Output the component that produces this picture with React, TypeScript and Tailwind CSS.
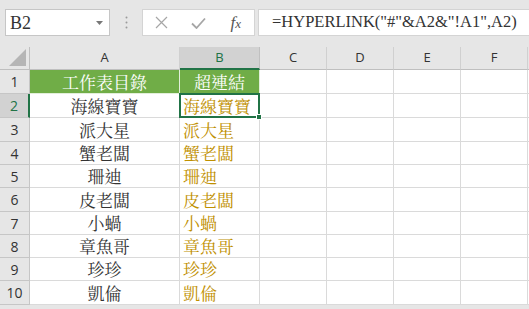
import React from "react";

const names = ["海線寶寶", "派大星", "蟹老闆", "珊迪", "皮老闆", "小蝸", "章魚哥", "珍珍", "凱倫"];
const heights = [24, 24, 24, 23, 23, 24, 23, 23, 23, 24];
const cjk = { fontFamily: '"Noto Serif CJK TC", "Noto Serif CJK SC", "Noto Sans CJK TC", serif' };
const ui = { fontFamily: '"Open Sans", "Noto Sans", sans-serif' };
const serif = { fontFamily: '"Liberation Serif", "Times New Roman", serif' };

export default function App() {
  const cols = ["A", "B", "C", "D", "E", "F"];
  return (
    <div className="w-[529px] h-[309px] overflow-hidden bg-[#e6e6e6] relative">
      {/* formula bar */}
      <div className="flex items-center h-[47px] pt-[9px] pb-[11px] pl-[5px]">
        <div className="w-[105px] h-[27px] bg-white border border-[#c6c6c6] flex items-center justify-between pl-[4px] pr-[6px]">
          <span className="text-[18px] text-[#333] leading-none" style={serif}>B2</span>
          <svg width="7" height="4" viewBox="0 0 7 4"><path d="M0 0h7L3.5 4z" fill="#777" /></svg>
        </div>
        <div className="w-[32px] flex justify-center">
          <svg width="3" height="13" viewBox="0 0 3 13">
            <circle cx="1.5" cy="1.5" r="1" fill="#9a9a9a" />
            <circle cx="1.5" cy="6.5" r="1" fill="#9a9a9a" />
            <circle cx="1.5" cy="11.5" r="1" fill="#9a9a9a" />
          </svg>
        </div>
        <div className="w-[113px] h-[27px] bg-white border border-[#d4d4d4] flex items-center">
          <div className="w-[38px] flex justify-center">
            <svg width="13" height="13" viewBox="0 0 13 13"><path d="M1 1L12 12M12 1L1 12" stroke="#a6a6a6" strokeWidth="1.2" /></svg>
          </div>
          <div className="w-[38px] flex justify-center">
            <svg width="15" height="12" viewBox="0 0 15 12"><path d="M1 6.5L5.5 11L14 1.5" stroke="#a6a6a6" strokeWidth="1.8" fill="none" /></svg>
          </div>
          <div className="w-[37px] flex justify-center">
            <span className="italic text-[17px] text-[#555] leading-none" style={serif}>f<span className="text-[13px]">x</span></span>
          </div>
        </div>
        <div className="ml-[3px] flex-1 h-[27px] bg-white border-y border-l border-[#d4d4d4] flex items-center pl-[13px]">
          <span className="text-[16.5px] text-[#333] leading-none whitespace-nowrap" style={serif}>=HYPERLINK("#"&amp;A2&amp;"!A1",A2)</span>
        </div>
      </div>

      {/* grid */}
      <div className="grid grid-cols-[30px_150px_80px_67px_67px_67px_67px_1fr]">
        <div className="h-[23px] bg-[#e6e6e6] border-r border-b border-[#bfbfbf] relative">
          <svg className="absolute right-[3px] bottom-[3px]" width="17" height="17" viewBox="0 0 17 17"><path d="M17 0V17H0z" fill="#b5b5b5" /></svg>
        </div>
        {cols.map((c) => (
          <div
            key={c}
            className={
              c === "B"
                ? "h-[23px] bg-[#d2d2d2] border-r border-[#c0c0c0] border-b-2 border-b-[#217346] flex items-center justify-center text-[13px] text-[#217346]"
                : "h-[23px] bg-[#e6e6e6] border-r border-[#d0d0d0] border-b border-b-[#bfbfbf] flex items-center justify-center text-[13px] text-[#333]"
            }
            style={ui}
          >
            {c}
          </div>
        ))}
        <div className="h-[23px] bg-[#e6e6e6] border-b border-[#bfbfbf]" />

        {heights.map((h, i) => {
          const r = i + 1;
          const header = r === 1;
          const sel = r === 2;
          return (
            <React.Fragment key={r}>
              <div
                className={
                  sel
                    ? "bg-[#d2d2d2] border-r-2 border-r-[#217346] border-b border-b-[#c6c6c6] flex items-center justify-center text-[14px] text-[#217346]"
                    : "bg-[#e6e6e6] border-r border-b border-[#c6c6c6] flex items-center justify-center text-[14px] text-[#333]"
                }
                style={{ ...ui, height: h }}
              >
                {r}
              </div>
              <div
                className={
                  header
                    ? "bg-[#70ad47] border-r border-b border-[#e2efda] flex items-center justify-center text-[17px] text-white"
                    : "bg-white border-r border-b border-[#dadada] flex items-center justify-center text-[17px] text-[#333]"
                }
                style={{ ...cjk, height: h }}
              >
                {header ? "工作表目錄" : names[i - 1]}
              </div>
              <div
                className={
                  header
                    ? "bg-[#70ad47] border-r border-b border-[#e2efda] flex items-center justify-center text-[17px] text-white"
                    : sel
                    ? "bg-white relative border-2 border-[#217346] -mt-px -ml-px flex items-center pl-[2px] text-[17px] text-[#bf9000]"
                    : "bg-white border-r border-b border-[#dadada] flex items-center pl-[3px] text-[17px] text-[#bf9000]"
                }
                style={{ ...cjk, height: sel ? h + 1 : h }}
              >
                {header ? "超連結" : names[i - 1]}
                {sel && (
                  <span className="absolute -right-[4px] -bottom-[4px] w-[6px] h-[6px] bg-[#217346] border border-white" />
                )}
              </div>
              {[0, 1, 2, 3].map((k) => (
                <div key={k} className="bg-white border-r border-b border-[#dadada]" style={{ height: h }} />
              ))}
              <div className="bg-white border-b border-[#dadada]" style={{ height: h }} />
            </React.Fragment>
          );
        })}
      </div>
    </div>
  );
}
